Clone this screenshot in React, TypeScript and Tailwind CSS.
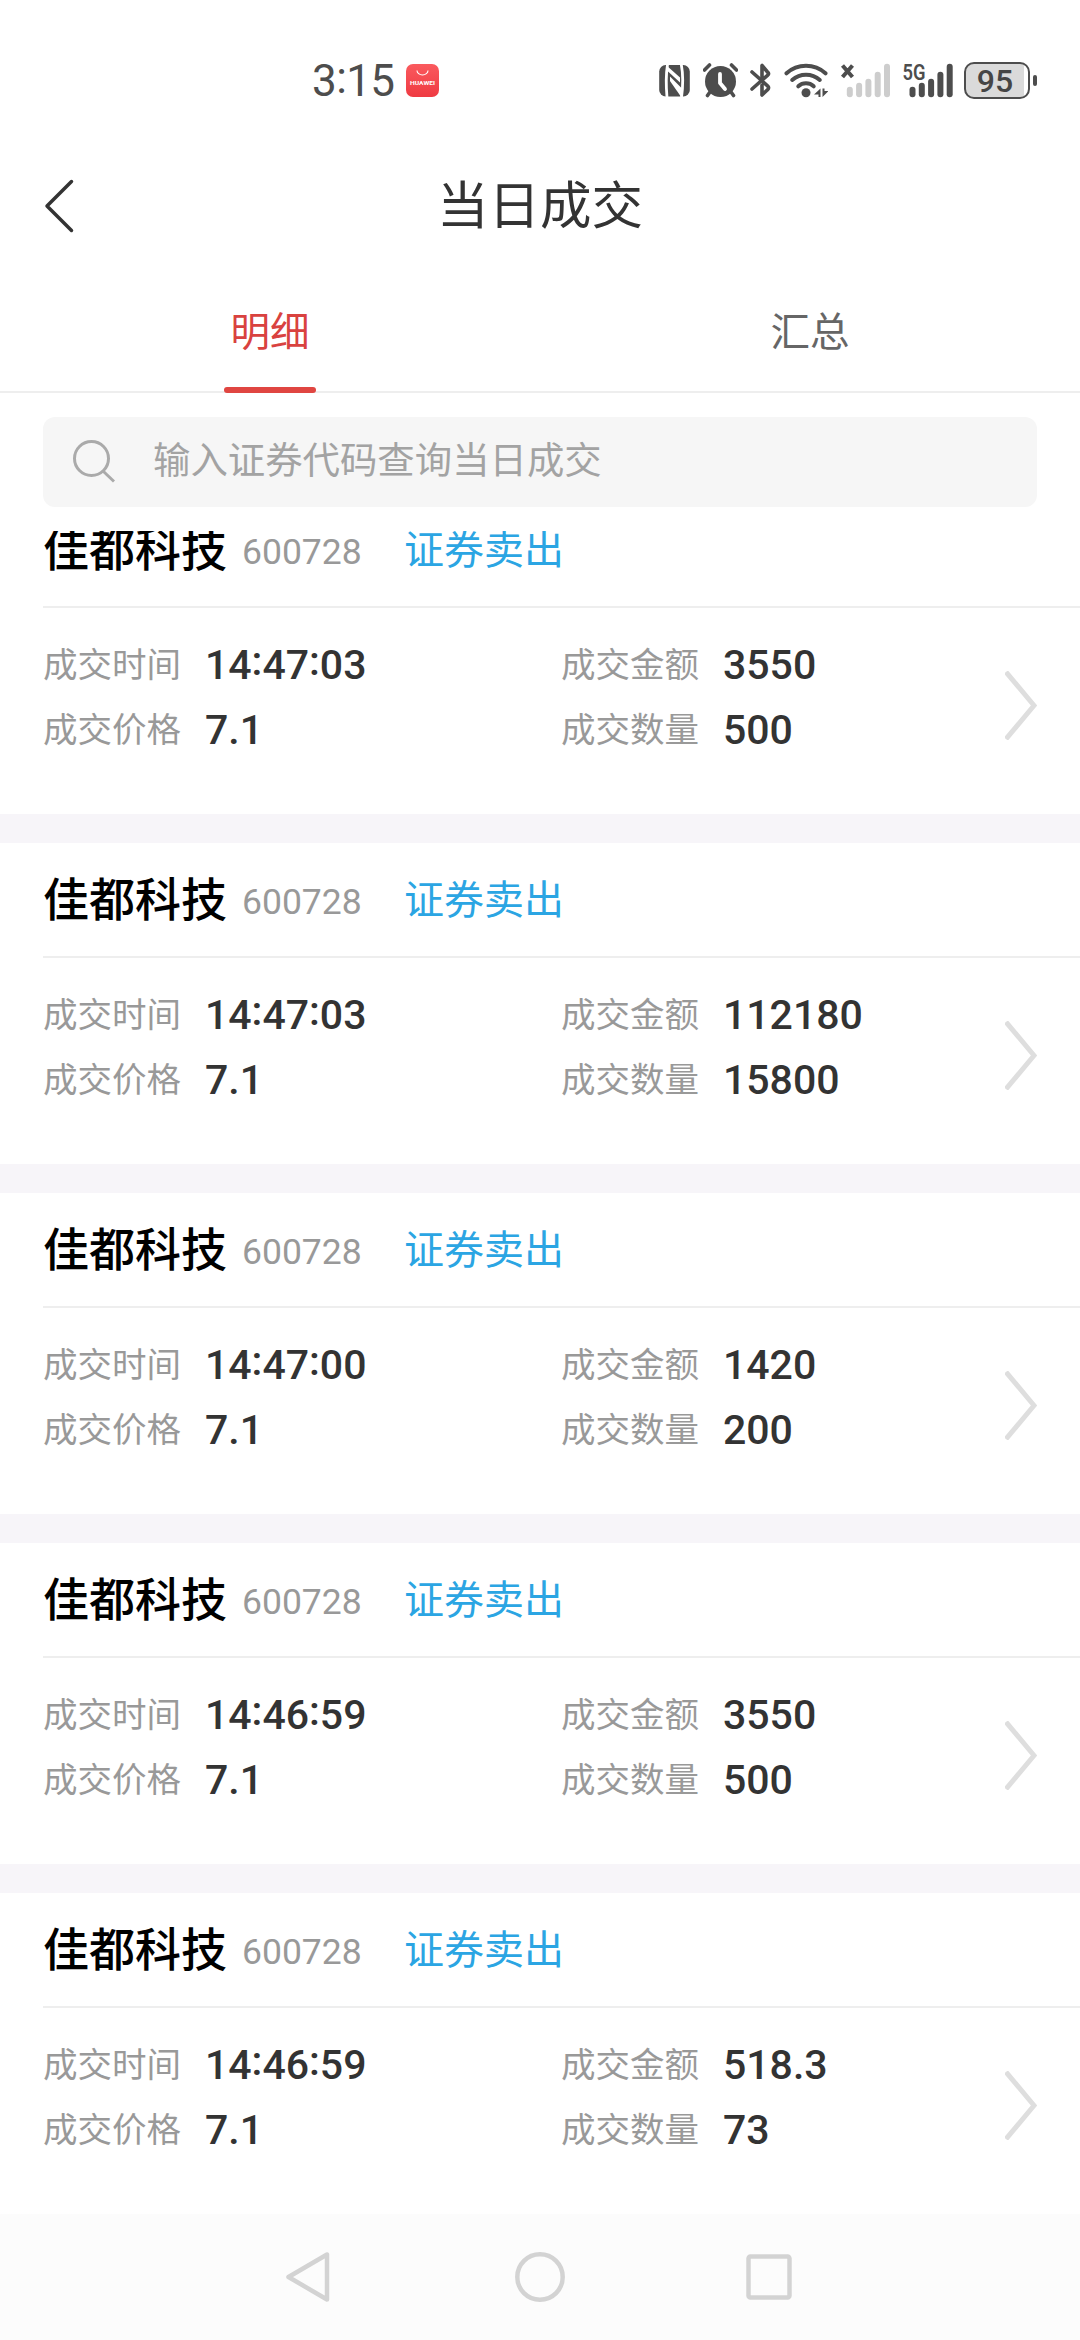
import { Fragment } from "react";

const trades = [
  { time: "14:47:03", price: "7.1", amount: "3550", count: "500" },
  { time: "14:47:03", price: "7.1", amount: "112180", count: "15800" },
  { time: "14:47:00", price: "7.1", amount: "1420", count: "200" },
  { time: "14:46:59", price: "7.1", amount: "3550", count: "500" },
  { time: "14:46:59", price: "7.1", amount: "518.3", count: "73" },
];

function SignalBars({ className }: { className: string }) {
  return (
    <g className={className}>
      <rect x="0" y="23.5" width="6" height="10.5" rx="3" />
      <rect x="9.3" y="19.5" width="6" height="14.5" rx="3" />
      <rect x="18.6" y="15.5" width="6" height="18.5" rx="3" />
      <rect x="27.9" y="8.5" width="6" height="25.5" rx="3" />
      <rect x="37.2" y="0.5" width="6" height="33.5" rx="3" />
    </g>
  );
}

function StatusBar() {
  return (
    <div className="flex h-[162px] shrink-0 items-start pt-[62px] text-[#4d4d4d]">
      <div className="ml-[312px] flex h-[38px] w-[94px] items-center text-[44px] leading-none tracking-[-0.6px]">
        3<span className="-translate-y-[3px]">:</span>15
      </div>
      {/* AppGallery notification */}
      <svg width="33" height="38" viewBox="0 0 33 38">
        <defs>
          <linearGradient id="gallery" x1="0" y1="0" x2="0" y2="1">
            <stop offset="0" stopColor="#fa5a5e" />
            <stop offset="1" stopColor="#ef3a42" />
          </linearGradient>
        </defs>
        <rect x="0" y="2" width="33" height="33" rx="7" fill="url(#gallery)" />
        <path d="M11 8.5a5.5 4.5 0 0 0 11 0" fill="none" stroke="#fff" strokeWidth="1.1" />
        <text x="16.5" y="23" textAnchor="middle" textLength="25" lengthAdjust="spacingAndGlyphs" fontSize="6" fontWeight="700" fill="#fff">HUAWEI</text>
      </svg>

      {/* nfc */}
      <svg className="ml-[220px]" width="31" height="38" viewBox="0 0 31 38">
        <rect x="0.2" y="3" width="30.6" height="31.5" rx="6.5" fill="currentColor" />
        <path d="M8.500 2.500C7 12 7 24 8 35.500" fill="none" stroke="#fff" strokeWidth="2.800" />
        <path d="M7.500 3.500L21 15.500v5L8.500 9z" fill="#fff" />
        <path d="M11 14.500l11.500 11.500V35.500L11 19z" fill="#fff" />
        <path d="M22.300 2.500c1.700 9 1.700 22 .2 33" fill="none" stroke="#fff" strokeWidth="2.800" />
      </svg>

      {/* alarm */}
      <svg className="ml-[13px]" width="35" height="38" viewBox="0 0 35 38" fill="none" stroke="currentColor">
        <circle cx="17.500" cy="19.500" r="15.500" fill="currentColor" stroke="none" />
        <path d="M1.500 8l5-5M33.500 8l-5-5M7 30l-2.500 3.500M28 30l2.500 3.500" strokeWidth="3.600" strokeLinecap="round" />
        <path d="M17 12v9l5 6" stroke="#fff" strokeWidth="3.800" strokeLinecap="round" strokeLinejoin="round" />
      </svg>

      {/* bluetooth */}
      <svg className="ml-[12px]" width="22" height="38" viewBox="0 0 22 38" fill="none" stroke="currentColor" strokeWidth="3.600" strokeLinecap="round" strokeLinejoin="round">
        <path d="M2 10l15.500 13.800c1.500 1.300 1.500 2.700 0 4L12 33V23" />
        <path d="M2 27l15.500-13.600c1.500-1.300 1.500-2.300 0-3.400L12 3.500V16" />
      </svg>

      {/* wifi */}
      <svg className="ml-[12px]" width="44" height="38" viewBox="0 0 44 38" fill="none" stroke="currentColor" strokeWidth="4" strokeLinecap="round">
        <path d="M2.500 11.300a29 29 0 0 1 39 0" />
        <path d="M8.200 18a20.500 20.500 0 0 1 27.600 0" />
        <path d="M14.300 24.300a11.500 11.500 0 0 1 15.400 0" />
        <circle cx="22" cy="30.800" r="4.500" fill="currentColor" stroke="none" />
        <path d="M36.500 26.500v8.500h-2v-2.500h-4.500zM38.500 35v-8.500h2v2.500h4z" fill="currentColor" stroke="none" />
      </svg>

      {/* sim 1, no service */}
      <svg className="ml-[12px]" width="50" height="38" viewBox="0 0 50 38">
        <path d="M2.500 3.500l10 11.500M12.500 3.500l-10 11.500" stroke="currentColor" strokeWidth="4" />
        <g transform="translate(6.800 1.200)">
          <SignalBars className="fill-[#cdcdcd]" />
        </g>
      </svg>

      {/* sim 2, 5G */}
      <svg className="ml-[10px]" width="54" height="38" viewBox="-2 0 54 38">
        <g transform="translate(7.500 1.200)">
          <SignalBars className="fill-[#4d4d4d]" />
        </g>
        <text x="0.500" y="18.300" textLength="23" lengthAdjust="spacingAndGlyphs" fontSize="22" fontWeight="600" fill="currentColor" stroke="#fff" strokeWidth="2" paintOrder="stroke">5G</text>
      </svg>

      {/* battery */}
      <div className="ml-[10px] flex h-[37px] w-[66px] items-center justify-center rounded-[10px] border-[2.500px] border-[#4d4d4d] bg-[linear-gradient(to_right,#dadada_94%,#fff_94%)] pr-1 text-[32px] leading-none font-medium text-[#454545]">
        95
      </div>
      <div className="mt-[13px] ml-[3px] h-[11px] w-[4px] rounded-[2px] bg-[#4d4d4d]" />
    </div>
  );
}

function Field({ label, value }: { label: string; value: string }) {
  return (
    <div className="flex h-[65px] items-center">
      <span className="w-[162px] text-[34.500px] leading-none text-[#999]">{label}</span>
      <span className="flex text-[41px] leading-none font-medium text-[#333]">
        {value.split(":").map((part, i) => (
          <Fragment key={i}>
            {i > 0 && <span className="-translate-y-1">:</span>}
            {part}
          </Fragment>
        ))}
      </span>
    </div>
  );
}

function TradeCard({ trade }: { trade: (typeof trades)[number] }) {
  return (
    <div className="h-[350px] border-b-[29px] border-[#f7f5f9] bg-white last:border-white">
      <div className="ml-[43px] flex h-[115px] items-center border-b-2 border-[#eee] leading-none">
        <span className="w-[199px] pt-px text-[46px] font-medium text-black">佳都科技</span>
        <span className="mt-1.5 w-[162px] text-[35.500px] text-[#999]">600728</span>
        <span className="pt-0.5 text-[40px] text-[#2ba5e3]">证券卖出</span>
      </div>
      <div className="flex pt-[25px] pl-[43px]">
        <div className="w-[518px]">
          <Field label="成交时间" value={trade.time} />
          <Field label="成交价格" value={trade.price} />
        </div>
        <div className="w-[444px]">
          <Field label="成交金额" value={trade.amount} />
          <Field label="成交数量" value={trade.count} />
        </div>
        <svg className="mt-[38px]" width="32" height="69" viewBox="0 0 32 69">
          <path d="M1 1l28 33.500L1 68" fill="none" stroke="#dedede" strokeWidth="5" />
        </svg>
      </div>
    </div>
  );
}

export default function App() {
  return (
    <div className="flex h-[2340px] w-[1080px] flex-col overflow-hidden bg-white font-[Roboto,'Noto_Sans_CJK_SC',sans-serif]">
      <StatusBar />

      <header className="flex h-[88px] shrink-0 items-center pl-[44px]">
        <svg width="30" height="54" viewBox="0 0 30 54">
          <path d="M27.500 2.500L3 27l24.500 24.500" fill="none" stroke="#333" strokeWidth="3.500" strokeLinecap="round" strokeLinejoin="round" />
        </svg>
        <h1 className="flex-1 pt-0.5 pr-[74px] text-center text-[51.500px] leading-none text-[#333]">当日成交</h1>
      </header>

      <nav className="flex h-[143px] shrink-0 border-b-2 border-[#eee] text-[39.500px] leading-none">
        <div className="flex flex-1 flex-col items-center pt-[63px] text-[#d9423f]">
          明细
          <div className="mt-auto -mb-[2px] h-[6px] w-[92px] shrink-0 rounded-full bg-[#e04641]" />
        </div>
        <div className="flex-1 pt-[63px] text-center text-[#666]">汇总</div>
      </nav>

      <div className="mx-[43px] mt-[24px] flex h-[90px] shrink-0 items-center rounded-xl bg-[#f6f6f6] pl-[29px]">
        <svg width="44" height="44" viewBox="0 0 44 44" fill="none" stroke="#aaa" strokeWidth="3">
          <circle cx="19.500" cy="18.500" r="17" />
          <path d="M31.500 31.500l10.500 10" />
        </svg>
        <span className="ml-[37px] text-[37.400px] leading-none text-[#a3a3a3]">输入证券代码查询当日成交</span>
      </div>

      {/* list is scrolled a little, so the first card is cut at the top */}
      <main className="mt-[24px] h-[1683px] shrink-0 overflow-hidden">
        <div className="-mt-[38px]">
          {trades.map((trade, i) => (
            <TradeCard key={i} trade={trade} />
          ))}
        </div>
      </main>

      <footer className="flex h-[126px] shrink-0 items-center justify-center gap-[180px] bg-[#fcfcfc]">
        <svg width="50" height="52" viewBox="0 0 50 52" fill="none" stroke="#d3d3d3" strokeWidth="4.500" strokeLinejoin="round">
          <path d="M4.500 26L43 3.500v45z" />
        </svg>
        <svg width="52" height="52" viewBox="0 0 52 52" fill="none" stroke="#d3d3d3" strokeWidth="4.500">
          <circle cx="26" cy="26" r="22.700" />
        </svg>
        <svg width="50" height="52" viewBox="0 0 50 52" fill="none" stroke="#d3d3d3" strokeWidth="4.500">
          <rect x="2.500" y="5.500" width="41" height="41" rx="2" />
        </svg>
      </footer>
    </div>
  );
}
